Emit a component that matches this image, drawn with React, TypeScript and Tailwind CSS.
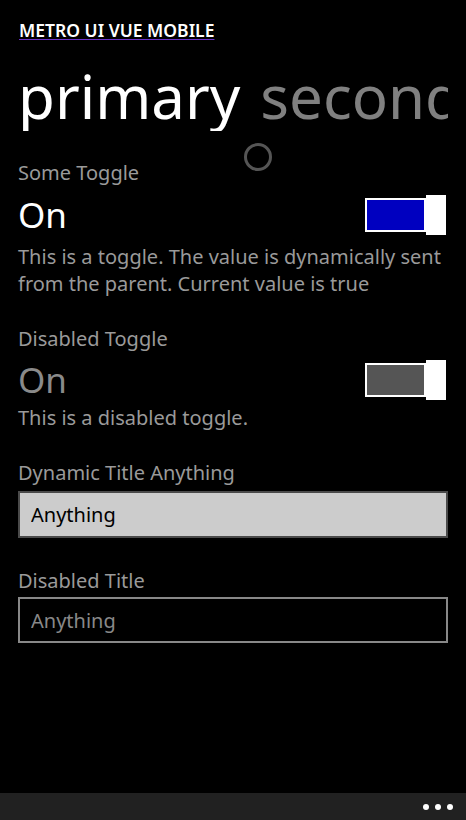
const Toggle = ({ disabled }: { disabled?: boolean }) => {
  return (
    <div className="flex items-center mr-[2px]">
      <div
        className={`w-[61px] h-[34px] border-2 border-white ${
          disabled ? 'bg-[#555555]' : 'bg-[#0000c0]'
        }`}
      ></div>
      <div className="w-[20px] h-[40px] bg-white"></div>
    </div>
  );
};

const App = () => {
  return (
    <div
      className="relative flex flex-col h-screen bg-black text-white overflow-hidden"
      style={{ fontFamily: '"Noto Sans", "Open Sans", sans-serif' }}
    >
      <div className="flex-1 px-[18px] overflow-hidden">
        <div className="pt-[19px] pl-px">
          <a
            href="#"
            className="text-[17.5px] leading-[23px] font-semibold text-white underline decoration-[#6a32c9] underline-offset-2"
          >
            METRO UI VUE MOBILE
          </a>
        </div>

        <div className="flex gap-[20px] mt-[18px] text-[60px] leading-[70px] whitespace-nowrap overflow-hidden">
          <span className="text-white">primary</span>
          <span className="text-[#808080]">secondary</span>
        </div>

        <div className="mt-[28px] text-[20px] leading-[27px] text-[#9a9a9a]">
          Some Toggle
        </div>
        <div className="flex items-center justify-between mt-[7px]">
          <span className="text-[35px] leading-[44px] text-white">On</span>
          <Toggle />
        </div>
        <p className="mt-[6px] text-[20px] leading-[27px] text-[#9a9a9a]">
          This is a toggle. The value is dynamically sent from the parent.
          Current value is true
        </p>

        <div className="mt-[28px] text-[20px] leading-[27px] text-[#9a9a9a]">
          Disabled Toggle
        </div>
        <div className="flex items-center justify-between mt-[6px]">
          <span className="text-[35px] leading-[44px] text-[#8a8a8a]">On</span>
          <Toggle disabled />
        </div>
        <p className="mt-[2px] text-[20px] leading-[27px] text-[#9a9a9a]">
          This is a disabled toggle.
        </p>

        <div className="mt-[28px] text-[20px] leading-[27px] text-[#9a9a9a]">
          Dynamic Title Anything
        </div>
        <input
          type="text"
          defaultValue="Anything"
          className="block w-full mt-[5px] h-[47px] px-[11px] bg-[#cccccc] border-2 border-[#4a4a4a] text-[20px] text-black outline-none"
        />

        <div className="mt-[29px] text-[20px] leading-[27px] text-[#9a9a9a]">
          Disabled Title
        </div>
        <input
          type="text"
          defaultValue="Anything"
          disabled
          className="block w-full mt-[3px] h-[46px] px-[11px] bg-black border-2 border-[#888888] text-[20px] text-[#888888] outline-none"
        />
      </div>

      <div className="flex items-center justify-end gap-[6px] h-[27px] pr-[13px] bg-[#212121]">
        <span className="w-[6px] h-[6px] rounded-full bg-white"></span>
        <span className="w-[6px] h-[6px] rounded-full bg-white"></span>
        <span className="w-[6px] h-[6px] rounded-full bg-white"></span>
      </div>

      <div className="absolute left-[244px] top-[143px] w-[28px] h-[28px] rounded-full border-[3px] border-[#555555]"></div>
    </div>
  );
};

export default App;
